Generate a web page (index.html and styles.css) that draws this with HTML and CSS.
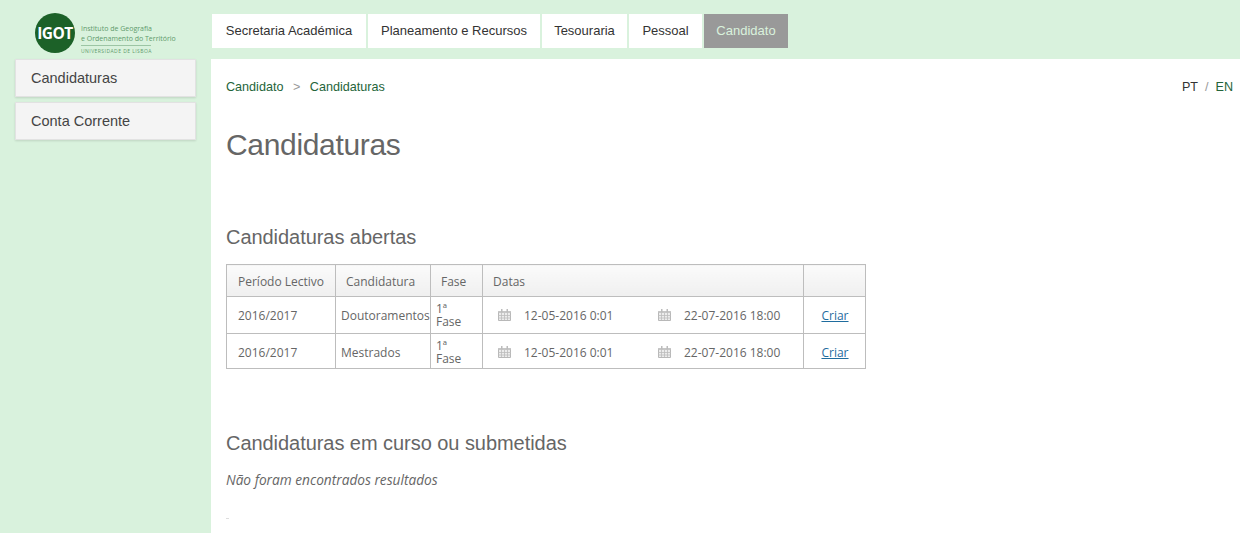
FILE: index.html
```html
<!DOCTYPE html>
<html lang="pt">
<head>
  <meta charset="UTF-8" />
  <title>Candidaturas</title>
  <link rel="stylesheet" href="styles.css">
</head>
<body>
  <div class="layout">
    <header class="top">
      <a class="logo">
        <svg class="logo-mark" width="40" height="40" viewBox="0 0 40 40"><circle cx="20" cy="20" r="20" fill="#1c6128"/><text x="20" y="25.500" text-anchor="middle" class="logo-mark-text">IGOT</text></svg>
        <div class="logo-text">
          <div>Instituto de Geografia</div>
          <div>e Ordenamento do Território</div>
          <div class="logo-uni">UNIVERSIDADE DE LISBOA</div>
        </div>
      </a>
      <nav class="menu">
        <a>Secretaria Académica</a>
        <a>Planeamento e Recursos</a>
        <a>Tesouraria</a>
        <a>Pessoal</a>
        <a class="active">Candidato</a>
      </nav>
    </header>
    <aside class="side">
      <a>Candidaturas</a>
      <a>Conta Corrente</a>
    </aside>
    <main class="content">
      <div class="topline">
        <div class="crumbs"><a>Candidato</a><span>&gt;</span><a>Candidaturas</a></div>
        <div class="lang"><b>PT</b><span>/</span><a>EN</a></div>
      </div>
      <h1>Candidaturas</h1>
      <h2 class="first">Candidaturas abertas</h2>
      <table class="grid">
        <colgroup><col class="c1"><col class="c2"><col class="c3"><col class="c4"><col class="c5"></colgroup>
        <thead>
          <tr><th class="th1">Período Lectivo</th><th>Candidatura</th><th>Fase</th><th>Datas</th><th></th></tr>
        </thead>
        <tbody>
          <tr>
            <td class="pad">2016/2017</td>
            <td>Doutoramentos</td>
            <td class="fase">1ª Fase</td>
            <td>
              <div class="dates">
                <span class="date"><svg class="cal" viewBox="0 0 13 12"><use href="#cal"/></svg>12-05-2016 0:01</span>
                <span class="date"><svg class="cal" viewBox="0 0 13 12"><use href="#cal"/></svg>22-07-2016 18:00</span>
              </div>
            </td>
            <td class="act"><a>Criar</a></td>
          </tr>
          <tr>
            <td class="pad">2016/2017</td>
            <td>Mestrados</td>
            <td class="fase">1ª Fase</td>
            <td>
              <div class="dates">
                <span class="date"><svg class="cal" viewBox="0 0 13 12"><use href="#cal"/></svg>12-05-2016 0:01</span>
                <span class="date"><svg class="cal" viewBox="0 0 13 12"><use href="#cal"/></svg>22-07-2016 18:00</span>
              </div>
            </td>
            <td class="act"><a>Criar</a></td>
          </tr>
        </tbody>
      </table>
      <h2 class="second">Candidaturas em curso ou submetidas</h2>
      <p class="empty">Não foram encontrados resultados</p>
      <div class="speck"></div>
    </main>
  </div>
  <svg width="0" height="0" class="defs">
    <symbol id="cal" viewBox="0 0 13 12">
      <path d="M.5 2.500h12v9H.5z" fill="#ececec" stroke="#b8b8b8"/>
      <path d="M.5 2h12v2H.5z" fill="#c6c6c6"/>
      <path d="M3 0h1.500v3.500H3zM8.500 0H10v3.500H8.500z" fill="#bcbcbc"/>
      <path d="M0 6.500h13M0 9h13M3.500 4v7M6.500 4v7M9.500 4v7" stroke="#bcbcbc" stroke-width=".8" fill="none"/>
    </symbol>
  </svg>
</body>
</html>
```
FILE: styles.css
```css
* { margin: 0; padding: 0; box-sizing: border-box; }
html, body { height: 100%; }
body {
  font-family: 'Liberation Sans', Arial, sans-serif;
  background: #d9f2dd; color: #666666;
  overflow: hidden;
}
.defs { position: absolute; }
.layout {
  display: grid; grid-template-columns: 211px 1fr; grid-template-rows: 59px 1fr;
  height: 100%;
}
.top { display: contents; }

.logo {
  display: flex; align-items: flex-start; gap: 6px;
  padding: 13px 0 0 35px;
}
.logo-mark-text { font-family: 'Open Sans', sans-serif; font-weight: 700; font-size: 15.500px; fill: #ffffff; letter-spacing: -0.5px; }
.logo-text { font-family: 'Open Sans', sans-serif; font-size: 7px; line-height: 10px; color: #5f9a6c; padding-top: 11px; white-space: nowrap; }
.logo-uni { font-size: 5px; line-height: 7px; letter-spacing: 0.45px; border-top: 1px solid #9cc5a4; margin-top: 1px; padding-top: 2px; width: 70px; white-space: nowrap; }

.menu {
  display: grid; grid-template-columns: 154px 172px 85px 73px 84px; gap: 2px;
  padding: 14px 0 0 1px; align-items: start; justify-content: start;
}
.menu a {
  height: 34px; line-height: 33px; text-align: center;
  background: #ffffff; color: #333333; font-size: 13px;
}
.menu a.active { background: #999999; color: #d9f2dd; }

.side { padding: 0 15px; display: flex; flex-direction: column; gap: 5px; }
.side a {
  height: 38px; line-height: 36px; padding-left: 15px;
  background: #f4f4f4; border: 1px solid #e2e2e2; color: #444444; font-size: 14.500px;
  box-shadow: 0 1px 2px rgba(0, 0, 0, 0.12);
}

.content { background: #ffffff; padding: 0 7px 0 15px; }
.topline { display: flex; justify-content: space-between; padding-top: 21px; font-size: 12.600px; line-height: 15px; }
.crumbs { color: #999999; }
.crumbs a { color: #24643a; }
.crumbs span { margin: 0 9.500px; }
.lang { color: #999999; }
.lang b { font-weight: 400; color: #333333; }
.lang a { color: #24643a; }
.lang span { margin: 0 7px; }

h1 { font-size: 30px; font-weight: 400; line-height: 36px; color: #666666; margin-top: 32px; letter-spacing: -0.33px; }
h2 { font-size: 20px; font-weight: 400; line-height: 24px; color: #666666; letter-spacing: -0.05px; }
h2.first { margin-top: 62px; }
h2.second { margin-top: 62px; }

.grid {
  border-collapse: collapse; table-layout: fixed; width: 639px; margin-top: 15px;
  font-family: 'Open Sans', sans-serif; font-size: 12px; color: #666666;
}
.c1 { width: 109px; } .c2 { width: 95px; } .c3 { width: 52px; } .c4 { width: 321px; } .c5 { width: 62px; }
.grid th, .grid td { border: 1px solid #bdbdbd; }
.grid th {
  height: 32px; font-weight: 400; text-align: left; padding: 2px 0 0 10px;
  background: linear-gradient(to bottom, #fbfbfb, #efefef);
}
.grid th.th1 { padding-left: 11px; }
.grid td { line-height: 13px; padding: 0 0 0 5px; }
.grid tbody tr:first-child { height: 37px; }
.grid tbody tr:last-child { height: 35px; }
.grid tbody tr:last-child td { padding-top: 2px; }
.grid td.pad { padding-left: 11px; }
.grid td.fase { padding-right: 10px; }
.dates { display: flex; padding-left: 10px; }
.date { display: flex; align-items: center; flex: none; width: 160px; white-space: nowrap; }
.cal { width: 13px; height: 12px; margin-right: 13px; }
.grid td.act { text-align: center; padding-left: 1px; }
.act a { color: #1f6c9e; text-decoration: underline; }

.empty { font-family: 'Open Sans', sans-serif; font-style: italic; font-size: 13.700px; line-height: 18px; margin-top: 16px; color: #666666; }
.speck { width: 3px; height: 1px; background: #dddddd; margin-top: 29px; }
```
